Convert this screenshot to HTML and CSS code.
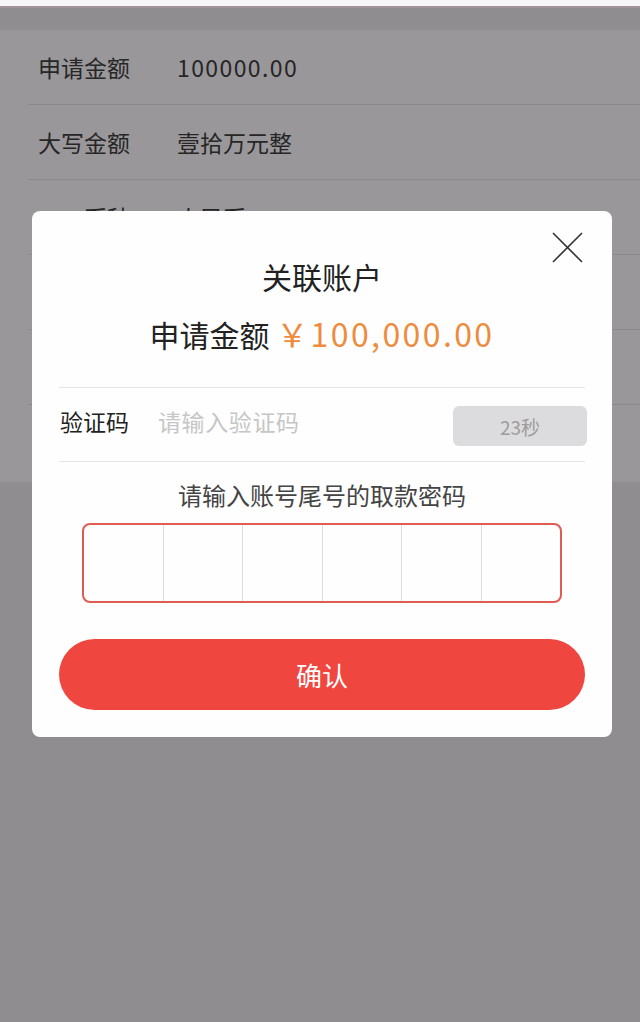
FILE: index.html
```html
<!DOCTYPE html>
<html lang="zh-CN">
<head>
<meta charset="utf-8">
<title>关联账户</title>
<link rel="stylesheet" href="styles.css">
</head>
<body>
<div class="page">
  <div class="status"></div>
  <div class="navbar"></div>
  <ul class="list">
    <li class="row"><span class="label">申请金额</span><span class="value num">100000.00</span></li>
    <li class="row"><span class="label">大写金额</span><span class="value">壹拾万元整</span></li>
    <li class="row"><span class="label">币种</span><span class="value">人民币</span></li>
    <li class="row"></li>
    <li class="row"></li>
    <li class="row last"></li>
  </ul>

  <div class="modal">
    <button class="close" aria-label="关闭">
      <svg width="31" height="31" viewBox="0 0 31 31"><path d="M1 1 L30 30 M30 1 L1 30" stroke="#333" stroke-width="1.6" fill="none"/></svg>
    </button>
    <h2 class="title">关联账户</h2>
    <p class="amount">申请金额 <span class="money">￥100,000.00</span></p>
    <div class="code-row">
      <span class="code-label">验证码</span>
      <span class="code-input">请输入验证码</span>
      <span class="timer">23秒</span>
    </div>
    <p class="hint">请输入账号尾号的取款密码</p>
    <div class="pin">
      <span class="cell"></span><span class="cell"></span><span class="cell"></span><span class="cell"></span><span class="cell"></span><span class="cell"></span>
    </div>
    <button class="confirm">确认</button>
  </div>
</div>
</body>
</html>
```
FILE: styles.css
```css
* { box-sizing: border-box; }
html, body { margin: 0; padding: 0; }
body {
  width: 640px;
  height: 1022px;
  overflow: hidden;
  background: #8f8d90;
  font-family: "Noto Sans CJK SC", "Noto Sans", sans-serif;
  color: #262626;
}
.page { position: relative; width: 640px; height: 1022px; }
.status { height: 8px; background: #f6f6f6; border-bottom: 2px solid #a3929a; }
.navbar { height: 22px; background: #8f8d90; }
.list {
  list-style: none;
  margin: 0;
  padding: 0 0 0 28px;
  background: #99979a;
}
.row {
  display: flex;
  align-items: center;
  height: 75px;
  border-bottom: 1px solid #8b898c;
  font-size: 23px;
  color: #262626;
}
.row.last { border-bottom: none; height: 77px; }
.label { width: 102px; text-align: right; padding-left: 9px; }
.value { margin-left: 47px; }
.num { letter-spacing: 1.4px; }

.modal {
  position: absolute;
  left: 32px;
  top: 211px;
  width: 580px;
  background: #fefefe;
  border-radius: 8px;
  padding: 45px 27px 27px;
  display: flex;
  flex-direction: column;
  align-items: stretch;
}
.close {
  position: absolute;
  top: 21px;
  right: 29px;
  width: 31px;
  height: 31px;
  padding: 0;
  border: none;
  background: none;
}
.close svg { display: block; }
.title {
  margin: 0;
  text-align: center;
  font-size: 30px;
  line-height: 40px;
  font-weight: 400;
  color: #222;
}
.amount {
  margin: 15px 0 0;
  text-align: center;
  font-size: 30px;
  line-height: 44px;
  color: #222;
  padding-bottom: 31px;
  border-bottom: 1px solid #e6e6e6;
}
.money { color: #ee8c3d; font-size: 32px; letter-spacing: 2.4px; }
.code-row {
  display: flex;
  align-items: center;
  height: 74px;
  padding-bottom: 8px;
  border-bottom: 1px solid #e6e6e6;
  font-size: 23px;
}
.code-label { color: #222; width: 99px; padding-left: 1px; }
.code-input { flex: 1; color: #c6c6c6; letter-spacing: 0.6px; }
.timer {
  align-self: flex-start;
  width: 134px;
  height: 40px;
  margin-top: 18px;
  margin-right: -2px;
  border-radius: 6px;
  background: #dcdbdd;
  color: #9c9c9c;
  font-size: 19px;
  display: flex;
  align-items: center;
  justify-content: center;
}
.hint {
  margin: 17px 0 0;
  text-align: center;
  font-size: 24px;
  line-height: 32px;
  color: #444;
}
.pin {
  align-self: center;
  margin-top: 12px;
  width: 480px;
  height: 80px;
  border: 2px solid #df5c55;
  border-radius: 8px;
  display: flex;
  overflow: hidden;
}
.cell { flex: 1; border-left: 1px solid #dddddd; }
.cell:first-child { border-left: none; }
.confirm {
  margin-top: 36px;
  height: 71px;
  border: none;
  border-radius: 36px;
  background: #ef463f;
  color: #fff;
  font-family: inherit;
  font-size: 26px;
}
```
